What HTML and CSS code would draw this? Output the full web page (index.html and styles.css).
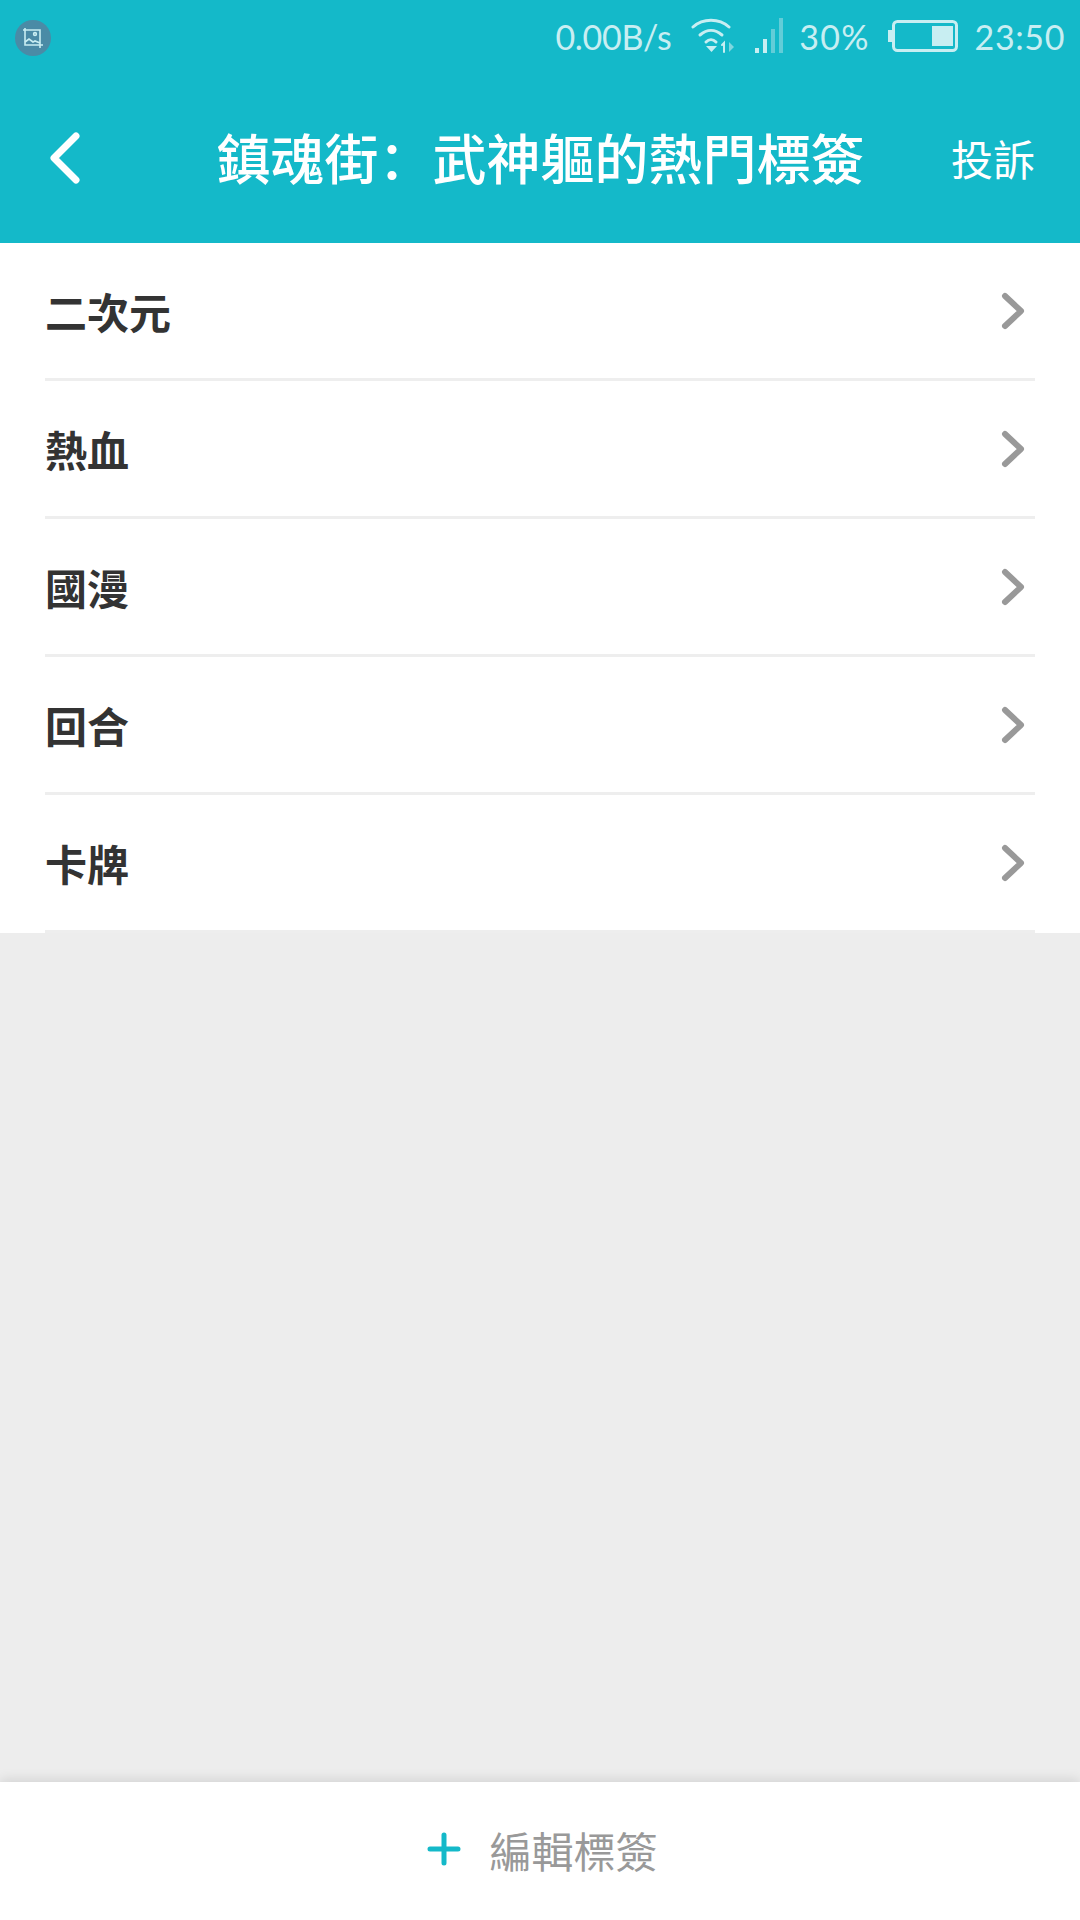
FILE: index.html
```html
<!DOCTYPE html>
<html lang="zh-Hant">
<head>
    <meta charset="UTF-8">
    <meta name="viewport" content="width=device-width, initial-scale=1.0">
    <title>熱門標簽</title>
    <link rel="stylesheet" href="styles.css">
</head>
<body>
    <div id="container">
        <header class="top">
            <div class="status">
                <div class="shot-badge">
                    <svg width="20" height="20" viewBox="0 0 20 20" fill="none" stroke="#c8eef2" stroke-width="1.6">
                        <path d="M2 0v17h18M0 2h17v18"/>
                        <path d="M2 14l4-3 4 3 2-1 5 2"/>
                        <circle cx="12" cy="6" r="1.4"/>
                    </svg>
                </div>
                <span class="speed">0.00B/s</span>
                <svg class="wifi" width="44" height="36" viewBox="0 0 44 36" fill="none" stroke="#c8eef2" stroke-width="3" stroke-linecap="round">
                    <path d="M2 9C12 0 28 0 38 9"/>
                    <path d="M9 17C16 11 24 11 31 17"/>
                    <path d="M15 24C18 21 22 21 25 24"/>
                    <path d="M15 28h11l-5.500 6z" fill="#c8eef2" stroke="none"/>
                    <path d="M33 34v-9l-2 2" stroke-width="2"/>
                    <path d="M38 24v10l5-5z" fill="#7fd7df" stroke="none"/>
                </svg>
                <svg class="signal" width="28" height="36" viewBox="0 0 28 36">
                    <rect x="0" y="30" width="4" height="5" fill="#c8eef2"/>
                    <rect x="8" y="21" width="4" height="14" fill="#c8eef2"/>
                    <rect x="16" y="11" width="4" height="24" fill="#62cdd8"/>
                    <rect x="24" y="0" width="4" height="35" fill="#62cdd8"/>
                </svg>
                <span class="percent">30%</span>
                <svg class="battery" width="71" height="32" viewBox="0 0 71 32">
                    <rect x="0" y="10" width="4" height="12" fill="#c8eef2"/>
                    <rect x="5.500" y="1.500" width="63" height="29" rx="4" fill="none" stroke="#c8eef2" stroke-width="3"/>
                    <rect x="44" y="6" width="21" height="20" fill="#c8eef2"/>
                </svg>
                <span class="clock">23:50</span>
            </div>
            <div class="titlebar">
                <svg class="back" width="30" height="52" viewBox="0 0 30 52" fill="none" stroke="#fff" stroke-width="7" stroke-linecap="round" stroke-linejoin="round">
                    <path d="M26 4L4 26l22 22"/>
                </svg>
                <h1 lang="zh-Hans">鎮魂街：武神軀的熱門標簽</h1>
                <span class="report">投訴</span>
            </div>
        </header>

        <ul class="tags">
            <li><span>二次元</span><svg class="arrow" width="24" height="38" viewBox="0 0 24 38"><path d="M4 4l16 15L4 34"/></svg></li>
            <li><span>熱血</span><svg class="arrow" width="24" height="38" viewBox="0 0 24 38"><path d="M4 4l16 15L4 34"/></svg></li>
            <li><span>國漫</span><svg class="arrow" width="24" height="38" viewBox="0 0 24 38"><path d="M4 4l16 15L4 34"/></svg></li>
            <li><span>回合</span><svg class="arrow" width="24" height="38" viewBox="0 0 24 38"><path d="M4 4l16 15L4 34"/></svg></li>
            <li><span>卡牌</span><svg class="arrow" width="24" height="38" viewBox="0 0 24 38"><path d="M4 4l16 15L4 34"/></svg></li>
        </ul>

        <div class="empty"></div>

        <footer class="edit">
            <svg width="34" height="34" viewBox="0 0 34 34" stroke="#14b9c9" stroke-width="5" stroke-linecap="round">
                <path d="M17 3v28M3 17h28"/>
            </svg>
            <span>編輯標簽</span>
        </footer>
    </div>
</body>
</html>
```

FILE: styles.css
```css
* {
    box-sizing: border-box;
}

body {
    margin: 0;
    background: #ededed;
    font-family: "Noto Sans CJK SC", "Noto Sans CJK TC", "Noto Sans", sans-serif;
}

#container {
    width: 1080px;
    height: 1920px;
    display: flex;
    flex-direction: column;
}

.top {
    height: 243px;
    background: #14b9c9;
    color: #fff;
}

.status {
    height: 72px;
    padding: 0 15px;
    display: flex;
    align-items: center;
    color: #c8eef2;
    font-family: Lato, sans-serif;
    font-size: 34px;
}

.shot-badge {
    width: 36px;
    height: 36px;
    margin-top: 3px;
    border-radius: 50%;
    background: #4a8ba6;
    display: flex;
    align-items: center;
    justify-content: center;
}

.speed {
    margin-left: auto;
    letter-spacing: -0.3px;
}

.wifi {
    margin-left: 20px;
}

.signal {
    margin-left: 20px;
}

.percent {
    margin-left: 16px;
    letter-spacing: 1.2px;
}

.battery {
    margin-left: 18px;
}

.clock {
    margin-left: 16px;
    letter-spacing: 0.6px;
}

.titlebar {
    height: 171px;
    padding: 0 45px 0 50px;
    display: flex;
    align-items: center;
    justify-content: space-between;
}

.titlebar h1 {
    margin: 0 0 2px 50px;
    font-size: 54px;
    font-weight: 500;
    line-height: 1;
}

.report {
    font-size: 42px;
}

.tags {
    margin: 0;
    padding: 0;
    list-style: none;
    background: #fff;
}

.tags li {
    height: 138px;
    margin: 0 45px;
    border-bottom: 3px solid #eee;
    display: flex;
    align-items: center;
    justify-content: space-between;
    color: #333;
    font-size: 42px;
    font-weight: 700;
}

.arrow {
    margin-right: 10px;
    fill: none;
    stroke: #999;
    stroke-width: 6;
    stroke-linecap: round;
    stroke-linejoin: round;
}

.empty {
    flex: 1;
}

.edit {
    height: 138px;
    padding: 0 0 4px 5px;
    background: #fff;
    box-shadow: 0 -2px 12px rgba(0, 0, 0, 0.12);
    display: flex;
    align-items: center;
    justify-content: center;
    gap: 28px;
    color: #999;
    font-size: 42px;
}
```
